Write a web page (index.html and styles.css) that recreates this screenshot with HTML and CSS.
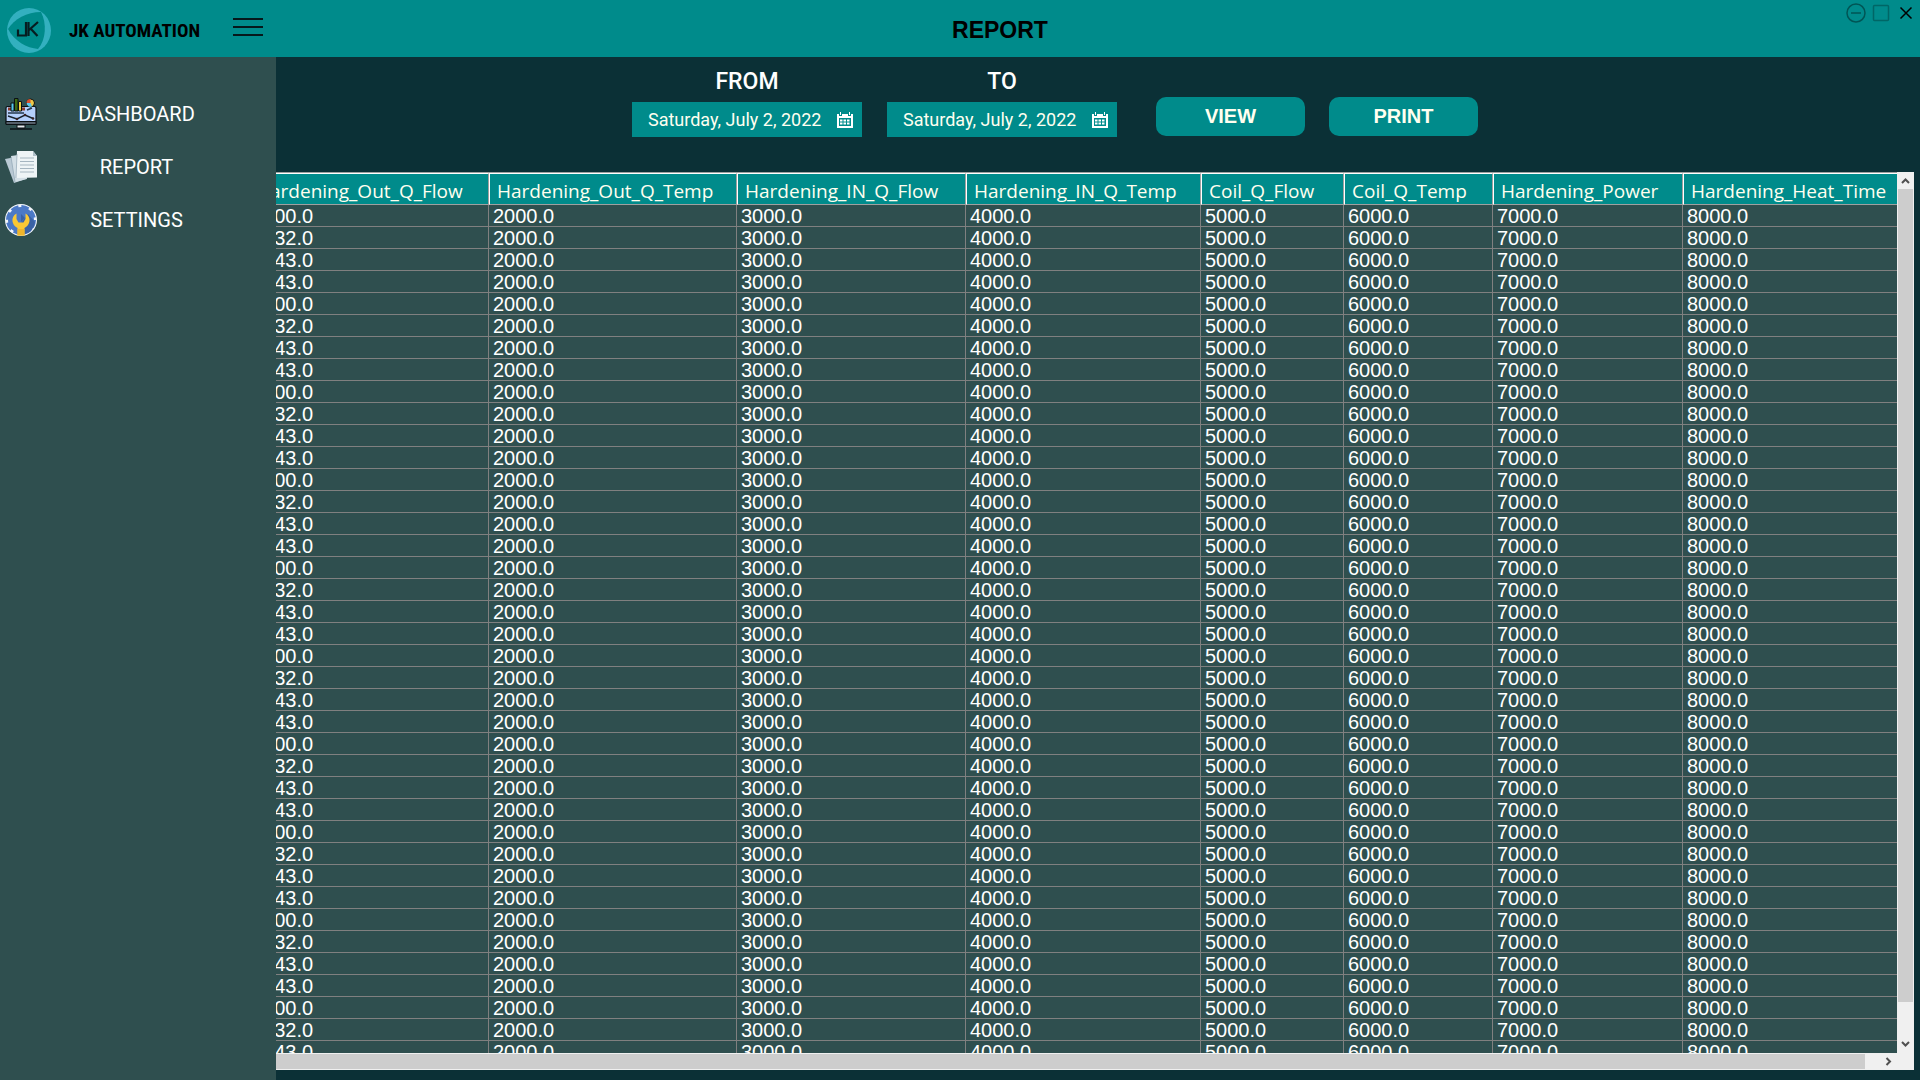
FILE: index.html
```html
<!DOCTYPE html>
<html lang="en">
<head>
<meta charset="utf-8">
<meta name="viewport" content="width=device-width, initial-scale=1">
<title>JK Automation - Report</title>
<link rel="stylesheet" href="styles.css">
</head>
<body>
<header class="topbar">
  <div class="brand">
    <svg class="brand-logo" viewBox="0 0 44 45" aria-hidden="true">
      <ellipse cx="22" cy="22.500" rx="22" ry="22.500" fill="#33b0bf"/>
      <path d="M1 21C7 11 20 4 34 4C40 15 39 32 31 41C20 40 7 33 1 21Z" fill="#008b8b"/>
      <path d="M19 14V27.500H11V21.500M21.500 14V28M31 14L22 22M24 21L30.500 28" fill="none" stroke="#061c20" stroke-width="2.200"/>
    </svg>
    <span class="brand-name">JK AUTOMATION</span>
    <button class="menu-button" type="button" aria-label="Toggle menu">
      <svg viewBox="0 0 30 20" aria-hidden="true"><path d="M0 2H30M0 10H30M0 18H30" stroke="#06181b" stroke-width="2"/></svg>
    </button>
  </div>
  <h1 class="page-title">REPORT</h1>
  <div class="window-controls">
    <button type="button" aria-label="Minimize"><svg viewBox="0 0 20 20" aria-hidden="true"><circle cx="10" cy="10" r="9" fill="none" stroke="#055" stroke-width="1.500"/><path d="M5 10H15" stroke="#055" stroke-width="1.500"/></svg></button>
    <button type="button" aria-label="Maximize"><svg viewBox="0 0 20 20" aria-hidden="true"><rect x="2.500" y="2.500" width="15" height="15" rx="1" fill="none" stroke="#066" stroke-width="1.500"/></svg></button>
    <button type="button" aria-label="Close"><svg viewBox="0 0 20 20" aria-hidden="true"><path d="M4.500 4.500L15.500 15.500M15.500 4.500L4.500 15.500" stroke="#000" stroke-width="1.500"/></svg></button>
  </div>
</header>
<div class="layout">
  <nav class="sidebar" aria-label="Main">
    <a class="nav-link" href="#dashboard">
      <svg viewBox="0 0 32 32" aria-hidden="true">
        <rect x="1" y="8.500" width="30" height="18" rx="1.500" fill="#b5d0fb" stroke="#0b1114" stroke-width="1.200"/>
        <path d="M1 23.500H31V26.500H1Z" fill="#56606a" stroke="#0b1114"/>
        <path d="M3 11H6M17 11H20" stroke="#8b3a2c" stroke-width="3"/>
        <path d="M6 5H9V13H6Z" fill="#58c9ee" stroke="#0b1114"/>
        <path d="M9.500 .500H13V13H9.500Z" fill="#3f6b12" stroke="#0b1114"/>
        <path d="M13.500 3.500H16.500V13H13.500Z" fill="#f4cf45" stroke="#0b1114"/>
        <path d="M3 15H19M22 12L27 10" stroke="#26394f" stroke-width="1.500"/>
        <path d="M3 18L12 21L20 17L28 20.500" fill="none" stroke="#18232d" stroke-width="1.400"/>
        <circle cx="12" cy="21" r="1.300" fill="#3b2424"/><circle cx="20" cy="17" r="1.300" fill="#3b2424"/><circle cx="28" cy="20.500" r="1.300" fill="#3b2424"/>
        <circle cx="25.500" cy="5" r="4" fill="#efc947" stroke="#0b1114"/>
        <path d="M25.500 5V1A4 4 0 0 0 21.500 5Z" fill="#d7512f"/>
        <path d="M21.500 5H25.500L27 8.500A4 4 0 0 1 21.500 5Z" fill="#58c9ee"/>
        <path d="M12 27H20V30H12Z" fill="#e3e8eb" stroke="#0b1114"/>
        <path d="M5 31H27" stroke="#0b1114" stroke-width="1.500"/>
      </svg>
      <span>DASHBOARD</span>
    </a>
    <a class="nav-link" href="#report">
      <svg viewBox="0 0 32 32" aria-hidden="true">
        <path d="M0 8L16 5L21 28L9 32Z" fill="#b9c9d4"/>
        <path d="M6 5L20 3L22 28L10 31Z" fill="#d3dfe6"/>
        <path d="M12 0H28L32 5V26.500L11 27Z" fill="#eef4f6"/>
        <path d="M28 0V5H32Z" fill="#aebfc9"/>
        <path d="M6 6L10 31M12 3L11 27" stroke="#91a6b4" stroke-width=".700"/>
        <path d="M15 7H29M15 10.500H29M15 14H29M15 17.500H29M15 21H29" stroke="#a5b5c0" stroke-width="1.200"/>
      </svg>
      <span>REPORT</span>
    </a>
    <a class="nav-link" href="#settings">
      <svg viewBox="0 0 32 32" aria-hidden="true">
        <circle cx="16" cy="16" r="16" fill="#f3f6fb"/>
        <circle cx="16" cy="16" r="13" fill="#4c79c6"/>
        <circle cx="16" cy="16" r="13.500" fill="none" stroke="#4c79c6" stroke-width="3" stroke-dasharray="7.600 3"/>
        <path d="M23 10L30 18A14 14 0 0 1 20 30L14 22Z" fill="#3b62a4"/>
        <path d="M16 10L20 14L16 18Z" fill="#3b62a4"/>
        <path d="M11.500 9.500C5 13 7 21.500 12.500 24V31.500H19.500V24C25 21.500 27 13 20.500 9.500V15L18.500 18.500H13.500L11.500 15Z" fill="#fbc834"/>
        <path d="M12.500 25H19.500V31.500H12.500Z" fill="#efb52c"/>
      </svg>
      <span>SETTINGS</span>
    </a>
  </nav>
  <main class="content">
    <form class="toolbar">
      <div class="date-field">
        <label for="from-date">FROM</label>
        <div class="date-box">
          <input id="from-date" type="text" value="Saturday, July 2, 2022">
          <button type="button" aria-label="Choose start date"><svg viewBox="0 0 16 16" aria-hidden="true"><path d="M0 2H2V4H5V2H11V4H14V2H16V16H0Z" fill="#fff"/><path d="M3 0H4V3H3ZM12 0H13V3H12Z" fill="#fff"/><path d="M2 6H14V14H2Z" fill="#008b8b"/><path d="M3 8.500H13M3 11.500H13" stroke="#fff" stroke-width="2" stroke-dasharray="2.500 1"/></svg></button>
        </div>
      </div>
      <div class="date-field">
        <label for="to-date">TO</label>
        <div class="date-box">
          <input id="to-date" type="text" value="Saturday, July 2, 2022">
          <button type="button" aria-label="Choose end date"><svg viewBox="0 0 16 16" aria-hidden="true"><path d="M0 2H2V4H5V2H11V4H14V2H16V16H0Z" fill="#fff"/><path d="M3 0H4V3H3ZM12 0H13V3H12Z" fill="#fff"/><path d="M2 6H14V14H2Z" fill="#008b8b"/><path d="M3 8.500H13M3 11.500H13" stroke="#fff" stroke-width="2" stroke-dasharray="2.500 1"/></svg></button>
        </div>
      </div>
      <div class="actions">
        <button class="action" type="button">VIEW</button>
        <button class="action" type="button">PRINT</button>
      </div>
    </form>
    <section class="grid-frame" aria-label="Report data">
      <div class="viewport">
        <table class="report">
          <colgroup><col class="w-out-flow"><col class="w-out-temp"><col class="w-in-flow"><col class="w-in-temp"><col class="w-coil-flow"><col class="w-coil-temp"><col class="w-power"><col class="w-heat"></colgroup>
          <thead>
            <tr><th>Hardening_Out_Q_Flow</th><th>Hardening_Out_Q_Temp</th><th>Hardening_IN_Q_Flow</th><th>Hardening_IN_Q_Temp</th><th>Coil_Q_Flow</th><th>Coil_Q_Temp</th><th>Hardening_Power</th><th>Hardening_Heat_Time</th></tr>
          </thead>
          <tbody id="report-rows"></tbody>
        </table>
      </div>
      <div class="vscroll">
        <button type="button" aria-label="Scroll up"><svg viewBox="0 0 17 17" aria-hidden="true"><path d="M5 11L8.500 7.500L12 11" fill="none" stroke="#505050" stroke-width="2"/></svg></button>
        <div class="vtrack"><div class="vthumb"></div></div>
        <button type="button" aria-label="Scroll down"><svg viewBox="0 0 17 17" aria-hidden="true"><path d="M5 6L8.500 9.500L12 6" fill="none" stroke="#505050" stroke-width="2"/></svg></button>
      </div>
      <div class="hscroll">
        <div class="hthumb"></div>
        <button type="button" aria-label="Scroll right"><svg viewBox="0 0 17 17" aria-hidden="true"><path d="M6.500 5L10 8.500L6.500 12" fill="none" stroke="#505050" stroke-width="2"/></svg></button>
      </div>
      <div class="corner"></div>
    </section>
  </main>
</div>
<script src="app.js"></script>
</body>
</html>
```

FILE: styles.css
```css
* {
  box-sizing: border-box;
}

body {
  margin: 0;
  height: 100vh;
  display: flex;
  flex-direction: column;
  overflow: hidden;
  background: #0b3036;
  color: #fff;
  font-family: "Liberation Sans", Arial, sans-serif;
  font-size: 20px;
}

button {
  margin: 0;
  padding: 0;
  border: 0;
  background: none;
  font: inherit;
  color: inherit;
}

svg {
  display: block;
}

/* Top bar */
.topbar {
  display: grid;
  grid-template-columns: 276px 1fr 196px;
  flex: none;
  height: 57px;
  background: #008b8b;
  color: #000;
}

.brand {
  display: flex;
  align-items: center;
  padding: 4px 13px 0 7px;
}

.brand-logo {
  width: 44px;
  height: 45px;
}

.brand-name {
  margin-left: 18px;
  font-family: "Liberation Sans Narrow", "Roboto Condensed", sans-serif;
  font-size: 19px;
  font-weight: 700;
  white-space: nowrap;
}

.menu-button {
  margin-left: auto;
  padding-bottom: 8px;
}

.menu-button svg {
  width: 30px;
  height: 20px;
}

.page-title {
  margin: 0;
  align-self: center;
  padding-top: 2px;
  text-align: center;
  font-size: 23px;
  line-height: 28px;
  font-weight: 700;
}

.window-controls {
  display: flex;
  justify-content: flex-end;
  align-items: flex-start;
  gap: 5px;
  padding: 3px 4px 0 0;
}

.window-controls svg {
  width: 20px;
  height: 20px;
}

/* Sidebar */
.layout {
  display: flex;
  flex: 1;
  min-height: 0;
}

.sidebar {
  flex: none;
  width: 276px;
  padding-top: 30px;
  background: #2f4f4f;
}

.nav-link {
  display: flex;
  align-items: center;
  height: 53px;
  padding: 0 40px 0 5px;
  color: #fff;
  text-decoration: none;
  font-family: Roboto, sans-serif;
  line-height: 24px;
}

.nav-link svg {
  flex: none;
  width: 32px;
  height: 32px;
}

.nav-link span {
  flex: 1;
  text-align: center;
}

/* Filters */
.content {
  display: flex;
  flex-direction: column;
  flex: 1;
  min-width: 0;
  padding: 0 6px 10px 0;
}

.toolbar {
  display: flex;
  justify-content: center;
  flex: none;
  gap: 25px;
  height: 115px;
  padding: 10px 80px 0 0;
}

.date-field {
  width: 230px;
}

.date-field label {
  display: block;
  height: 35px;
  text-align: center;
  font-family: Roboto, sans-serif;
  font-size: 23px;
  font-weight: 500;
  line-height: 30px;
}

.date-box {
  display: flex;
  align-items: center;
  height: 35px;
  padding-right: 9px;
  background: #008b8b;
}

.date-box input {
  flex: 1;
  min-width: 0;
  height: 35px;
  border: 0;
  padding: 0 0 0 16px;
  background: none;
  color: ivory;
  font-family: Roboto, sans-serif;
  font-size: 18px;
}

.date-box svg {
  width: 16px;
  height: 16px;
}

.actions {
  display: flex;
  gap: 24px;
  padding: 30px 0 0 14px;
}

.action {
  width: 149px;
  height: 39px;
  border-radius: 10px;
  background: #008b8b;
  color: ivory;
  font-weight: 700;
}

/* Data grid */
.grid-frame {
  display: grid;
  grid-template-columns: minmax(0, 1fr) 17px;
  grid-template-rows: minmax(0, 1fr) 17px;
  flex: 1;
  min-height: 0;
}

/* Scrolled to the last column, so earlier columns run off to the left */
.viewport {
  display: flex;
  justify-content: flex-end;
  align-items: flex-start;
  overflow: hidden;
  border-top: 1px solid #a0a0a0;
  background: #2f4f4f;
}

.report {
  flex: none;
  width: 1649px;
  table-layout: fixed;
  border-collapse: separate;
  border-spacing: 0;
}

.w-out-flow { width: 241px; }
.w-out-temp { width: 248px; }
.w-in-flow { width: 229px; }
.w-in-temp { width: 235px; }
.w-coil-flow { width: 143px; }
.w-coil-temp { width: 149px; }
.w-power { width: 190px; }
.w-heat { width: 214px; }

.report th {
  height: 32px;
  padding: 3px 0 0 7px;
  border: 1px solid #a0a0a0;
  border-top-color: #fff;
  border-left-color: #fff;
  background: #008b8b;
  color: ivory;
  font-family: "Open Sans", sans-serif;
  font-size: 19px;
  font-weight: 400;
  line-height: 24px;
  text-align: left;
  white-space: nowrap;
}

.report td {
  height: 22px;
  padding: 1px 0 0 4px;
  border-right: 1px solid #808080;
  border-bottom: 1px solid #808080;
  line-height: 20px;
}

.report th:last-child,
.report td:last-child {
  border-right: 0;
}

/* Scroll bars */
.vscroll,
.hscroll,
.corner {
  display: flex;
  background: #f0f0f0;
}

.vscroll {
  flex-direction: column;
}

.vscroll button {
  flex: none;
}

.vscroll svg,
.hscroll svg {
  width: 17px;
  height: 17px;
}

.vtrack {
  flex: 1;
  padding: 0 1px;
}

.vthumb {
  height: 96%;
  background: #cdcdcd;
}

.hscroll {
  padding: 1px 0;
  align-items: center;
}

.hthumb {
  flex: 1;
  height: 15px;
  margin-right: 15px;
  background: #cdcdcd;
}
```

FILE: app.js
```js
// Flow readings repeat every four cycles; the other channels are constant.
const flow = ["1000.0", "1232.0", "1343.0", "1343.0"];
const channels = ["2000.0", "3000.0", "4000.0", "5000.0", "6000.0", "7000.0", "8000.0"];
const body = document.getElementById("report-rows");

for (let i = 0; i < 39; i++) {
  const row = body.insertRow();
  [flow[i % 4], ...channels].forEach((value) => {
    row.insertCell().textContent = value;
  });
}
```
